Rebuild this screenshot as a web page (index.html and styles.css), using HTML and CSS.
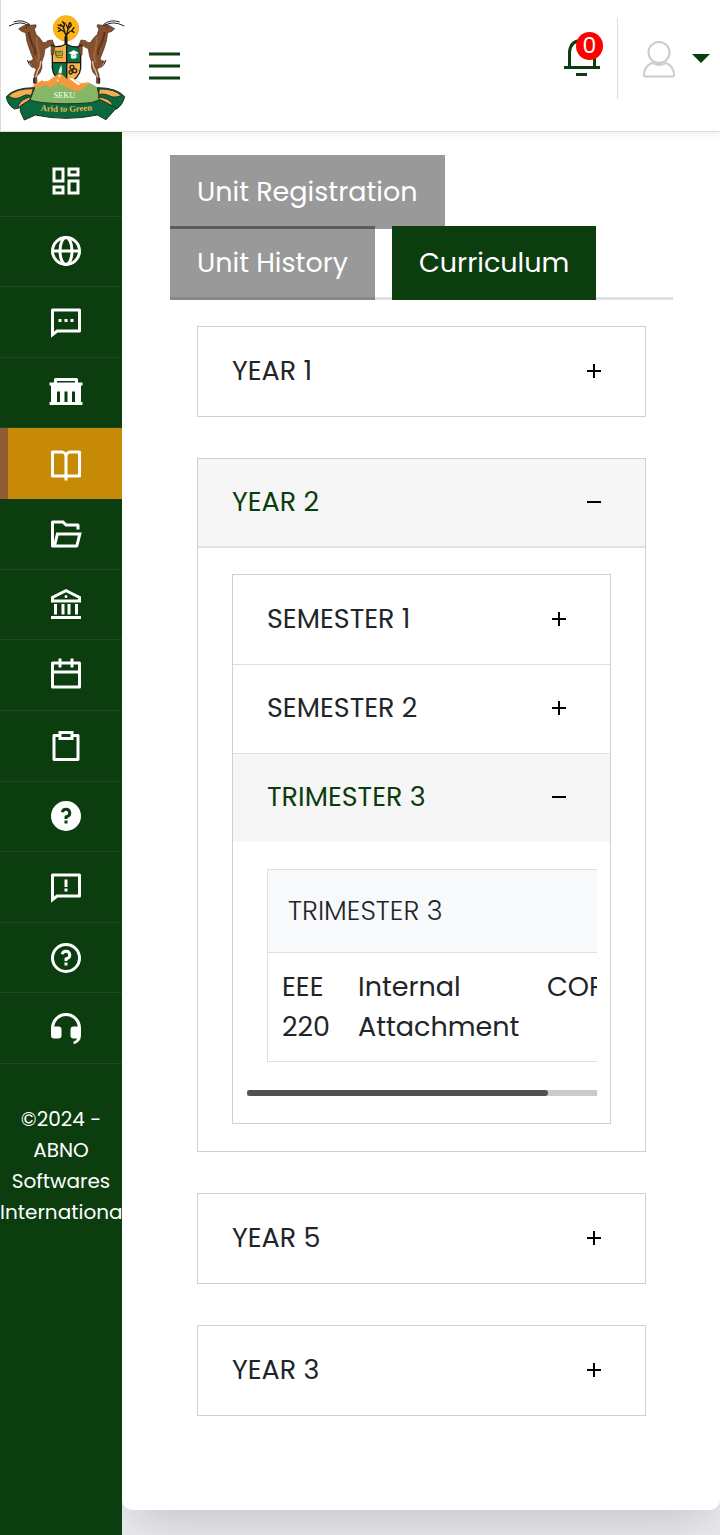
FILE: index.html
```html
<!DOCTYPE html>
<html lang="en">
<head>
<meta charset="utf-8">
<meta name="viewport" content="width=device-width, initial-scale=1">
<title>SEKU Student Portal - Curriculum</title>
<link rel="stylesheet" href="styles.css">
</head>
<body>
<header class="topbar">
  <a class="brand" href="#" aria-label="SEKU home">
    <svg class="logo" viewBox="15 40 366 330" role="img" aria-label="SEKU crest">
      <defs>
        <g id="goat">
          <path d="M56 87 L75 76 Q84 72 92 77 L107 75 Q112 80 103 88 L108 104 Q119 113 128 128 Q136 132 143 123 L157 121 L164 139 L161 164 L154 166 L153 137 Q146 143 135 147 Q133 170 125 187 Q129 204 120 219 L110 230 L111 250 L102 252 L103 225 L109 209 L98 201 L86 185 Q95 185 100 178 Q93 160 88 147 Q79 125 77 99 L64 95 Z" fill="#84502e" stroke="#4a2b1a" stroke-width="2"/>
          <path d="M86 97 Q90 123 100 139 Q108 151 105 166" fill="none" stroke="#5b3520" stroke-width="6"/>
          <path d="M110 112 Q111 147 117 160 Q120 173 112 187" fill="none" stroke="#a0683f" stroke-width="5"/>
          <path d="M122 184 Q123 199 113 214 L107 232" fill="none" stroke="#dfba94" stroke-width="4"/>
          <path d="M86 78 Q63 61 27 79 M90 75 Q67 57 41 67" fill="none" stroke="#20202a" stroke-width="3"/>
          <path d="M98 204 Q86 197 82 181" fill="none" stroke="#20202a" stroke-width="3"/>
          <path d="M153 136 L163 139 M102 235 V250" stroke="#222" stroke-width="5"/>
          <circle cx="79" cy="83" r="2" fill="#111"/>
        </g>
        <path id="ribbonText" d="M106 332 Q198 342 292 330"/>
      </defs>
      <circle cx="198" cy="86" r="38" fill="#fdb515" stroke="#f7a62c" stroke-width="3"/>
      <g fill="none" stroke="#151515" stroke-width="4" stroke-linecap="round">
        <path d="M198 140 V106 Q197 98 184 91 L174 84 M198 112 Q202 98 217 91 L222 84 M196 103 L190 82 L181 74 M190 86 L195 70 M201 102 L204 86 L199 76 M204 88 L214 77 L211 69 M184 91 L175 95 M214 93 L222 98 M182 79 L174 76 M193 74 L188 66 M206 80 L208 70"/>
        <path d="M198 142 V112" stroke-width="9"/>
      </g>
      <path d="M157 140 Q181 144 198 133 Q218 145 242 140 V205 Q240 235 198 256 Q159 235 157 205 Z" fill="#f7b04b"/>
      <path d="M200 135 Q218 145 242 140 V189 H200 Z M157 189 H200 V255 Q159 235 157 205 Z" fill="#087044"/>
      <path d="M157 140 Q181 144 198 133 Q218 145 242 140 V205 Q240 235 198 256 Q159 235 157 205 Z M200 134 V250 M157 189 H242" fill="none" stroke="#171717" stroke-width="4"/>
      <use href="#goat"/>
      <use href="#goat" transform="translate(400 0) scale(-1 1)"/>
      <path d="M168 155 h19 v12 h-19 z M170 173 h19 M165 152 l4 20 M172 160 h11" fill="none" stroke="#496b22" stroke-width="3"/>
      <path d="M206 160 L221 152 L235 159 L221 168 Z M213 166 v9 q8 5 16 -1 v-8 M234 160 v16" fill="#fff" stroke="#d8eee2" stroke-width="1"/>
      <path d="M184 195 Q178 206 175 219 L185 220 Q187 205 184 195" fill="#eaf5ee"/>
      <g fill="none" stroke="#29220d" stroke-width="4"><circle cx="216" cy="203" r="6"/><circle cx="224" cy="213" r="6"/><circle cx="212" cy="218" r="5"/></g>
      <path d="M91 277 L101 256 L129 240 L143 245 L180 219 L204 240 L217 235 L244 251 L265 248 L304 269 L306 283 Z" fill="#f6993e"/>
      <path d="M124 239 L138 233 L141 242 L132 246 Z M176 225 L183 229 L177 235 Z M208 237 L216 235 L242 252 L235 257 Z M170 241 L176 239 L174 246 Z" fill="#fff"/>
      <path d="M82 316 L104 268 L137 255 L151 264 L173 250 L205 266 L235 276 L269 251 L292 264 L315 312 Z" fill="#86b765"/>
      <path d="M104 264 Q42 264 19 291 Q22 315 43 328 L65 323 L92 296 Z M292 264 Q350 264 374 291 Q369 314 350 328 L327 323 L298 294 Z" fill="#09683e" stroke="#17301d" stroke-width="3"/>
      <path d="M100 267 Q48 266 25 289 Q44 302 63 292 Q76 282 94 287 Z M92 291 Q61 300 54 319 Q71 334 86 318 Z M298 268 Q344 267 364 288 Q342 296 330 289 Q309 279 296 286 Z M294 292 Q326 294 337 313 Q333 328 309 321 Z" fill="#f3ae55" stroke="#26391b" stroke-width="3"/>
      <path d="M62 318 L90 300 Q100 306 131 309 Q198 316 274 309 L302 300 L349 325 L318 360 L292 346 Q199 366 106 346 L73 361 L61 335 Z" fill="#09683e" stroke="#17301d" stroke-width="3"/>
      <text class="crest-name" x="193" y="294" text-anchor="middle">SEKU</text>
      <text class="crest-motto" text-anchor="middle"><textPath href="#ribbonText" startOffset="50%">Arid to Green</textPath></text>
    </svg>
  </a>
  <button class="menu-btn" aria-label="Toggle menu">
    <svg width="32" height="28" viewBox="0 0 32 28"><path d="M0 2H31M0 14H31M0 26H31" stroke="#0b3d0f" stroke-width="3"/></svg>
  </button>
  <div class="tools">
    <button class="bell" aria-label="Notifications">
      <svg width="36" height="40" viewBox="0 0 36 40"><path d="M0 30.500H36M12 37.500H23M5.500 30V15Q6.500 3.500 18 3.500T30.500 15V30" fill="none" stroke="#0b3d0f" stroke-width="3"/></svg>
      <span class="badge">0</span>
    </button>
    <button class="profile" aria-label="Account">
      <svg width="32" height="38" viewBox="0 0 32 38" fill="none" stroke="#ccc" stroke-width="2"><circle cx="16" cy="12.500" r="10.500"/><path d="M9 23Q1 26 1 35.500Q1 36.500 2 36.500H30Q31 36.500 31 35.500Q31 26 23 23Q16 27 9 23Z"/></svg>
      <svg width="18" height="10" viewBox="0 0 18 10"><path d="M0 0H18L9 9Z" fill="#0b3d0f"/></svg>
    </button>
  </div>
</header>
<div class="shell">
  <aside class="sidebar">
    <nav class="side-nav" aria-label="Main">
      <a href="#" aria-label="Dashboard"><svg viewBox="0 0 24 24"><path d="M19 5v2h-4V5h4M9 5v6H5V5h4m10 8v6h-4v-6h4M9 17v2H5v-2h4M21 3h-8v6h8V3zM11 3H3v10h8V3zm10 8h-8v10h8V11zm-10 4H3v6h8v-6z"/></svg></a>
      <a href="#" aria-label="Website"><svg viewBox="0 0 24 24" class="line"><circle cx="12" cy="12" r="9"/><ellipse cx="12" cy="12" rx="4" ry="9"/><path d="M3 12H21"/></svg></a>
      <a href="#" aria-label="Messages"><svg viewBox="0 0 24 24"><path d="M6.450 19L2 22.500V4a1 1 0 0 1 1-1h18a1 1 0 0 1 1 1v14a1 1 0 0 1-1 1H6.450zM4 18.380L5.760 17H20V5H4v13.380zM7 10h2v2H7v-2zm4 0h2v2h-2v-2zm4 0h2v2h-2v-2z"/></svg></a>
      <a href="#" aria-label="Institution"><svg viewBox="0 0 24 24"><path fill-rule="evenodd" d="M4 3Q4 2 5 2H19Q20 2 20 3V5H23V7H22V18H23V20H1V18H2V7H1V5H4ZM6 4V5H18V4ZM6 11V18H8V11ZM11 11V18H13V11ZM16 11V18H18V11Z"/></svg></a>
      <a href="#" class="active" aria-current="page" aria-label="Academics"><svg viewBox="0 0 24 24"><path d="M13 21v2h-2v-2H3a1 1 0 0 1-1-1V4a1 1 0 0 1 1-1h6a3.990 3.990 0 0 1 3 1.350A3.990 3.990 0 0 1 15 3h6a1 1 0 0 1 1 1v16a1 1 0 0 1-1 1h-8zm7-2V5h-5a2 2 0 0 0-2 2v12h7zm-9 0V7a2 2 0 0 0-2-2H4v14h7z"/></svg></a>
      <a href="#" aria-label="Files"><svg viewBox="0 0 24 24"><path d="M3 21a1 1 0 0 1-1-1V4a1 1 0 0 1 1-1h7.410l2 2H20a1 1 0 0 1 1 1v3h-2V7h-7.410l-2-2H4v11.990L5.500 11h17l-2.310 9.240a1 1 0 0 1-.970.760H3zm16.940-8H7.060l-1.500 6h12.880l1.500-6z"/></svg></a>
      <a href="#" aria-label="Finance"><svg viewBox="0 0 24 24"><path fill-rule="evenodd" d="M2 20h20v2H2v-2zm2-8h2v7H4v-7zm5 0h2v7H9v-7zm4 0h2v7h-2v-7zm5 0h2v7h-2v-7zM2 7l10-5 10 5v4H2V7zm2 1.240V9h16v-.760l-8-4-8 4zM12 8a1 1 0 1 1 0-2 1 1 0 0 1 0 2z"/></svg></a>
      <a href="#" aria-label="Timetable"><svg viewBox="0 0 24 24"><path d="M17 3h4a1 1 0 0 1 1 1v16a1 1 0 0 1-1 1H3a1 1 0 0 1-1-1V4a1 1 0 0 1 1-1h4V1h2v2h6V1h2v2zm3 8H4v8h16v-8zm-5-6H9v2H7V5H4v4h16V5h-3v2h-2V5z"/></svg></a>
      <a href="#" aria-label="Forms"><svg viewBox="0 0 24 24"><path d="M7 4V2h10v2h3.010c.540 0 .990.450.990.990v16.020a1 1 0 0 1-.990.990H3.990a1 1 0 0 1-.990-.990V4.990C3 4.450 3.450 4 3.990 4H7zm0 2H5v14h14V6h-2v2H7V6zm2-2v2h6V4H9z"/></svg></a>
      <a href="#" aria-label="FAQ"><svg viewBox="0 0 24 24"><path d="M12 22a10 10 0 1 1 0-20 10 10 0 0 1 0 20zm-1-7v2h2v-2h-2zm2-1.640A3.500 3.500 0 1 0 8.570 9.310l1.960.390A1.500 1.500 0 1 1 12 11.500a1 1 0 0 0-1 1V14h2v-.640z"/></svg></a>
      <a href="#" aria-label="Feedback"><svg viewBox="0 0 24 24"><path d="M6.450 19L2 22.500V4a1 1 0 0 1 1-1h18a1 1 0 0 1 1 1v14a1 1 0 0 1-1 1H6.450zM4 18.380L5.760 17H20V5H4v13.380zM11 13h2v2h-2v-2zm0-6h2v5h-2V7z"/></svg></a>
      <a href="#" aria-label="Help"><svg viewBox="0 0 24 24"><path d="M12 22a10 10 0 1 1 0-20 10 10 0 0 1 0 20zm0-2a8 8 0 1 0 0-16 8 8 0 0 0 0 16zm-1-5h2v2h-2v-2zm2-1.640V14h-2v-1.500a1 1 0 0 1 1-1A1.500 1.500 0 1 0 10.530 9.700l-1.960-.390A3.500 3.500 0 1 1 13 13.360z"/></svg></a>
      <a href="#" aria-label="Support"><svg viewBox="0 0 24 24"><path d="M22 17a6 6 0 0 1-5 5.900v-1.900a4 4 0 0 0 2.500-2H17a2 2 0 0 1-2-2v-4a2 2 0 0 1 2-2h2.940a8 8 0 0 0-15.880 0H7a2 2 0 0 1 2 2v4a2 2 0 0 1-2 2H4a2 2 0 0 1-2-2v-5a10 10 0 1 1 20 0z"/></svg></a>
    </nav>
    <p class="copyright">©2024 - ABNO Softwares International</p>
  </aside>
  <main class="content">
    <section class="card">
      <div class="tabs" role="tablist">
        <button class="tab" role="tab">Unit Registration</button>
        <button class="tab" role="tab">Unit History</button>
        <button class="tab selected" role="tab" aria-selected="true">Curriculum</button>
      </div>
      <div class="years">
        <div class="panel"><button class="toggle" aria-expanded="false">YEAR 1<span class="sign"></span></button></div>
        <div class="panel">
          <button class="toggle ruled" aria-expanded="true">YEAR 2<span class="sign"></span></button>
          <div class="year-body">
            <div class="semesters">
              <button class="toggle" aria-expanded="false">SEMESTER 1<span class="sign"></span></button>
              <button class="toggle" aria-expanded="false">SEMESTER 2<span class="sign"></span></button>
              <button class="toggle" aria-expanded="true">TRIMESTER 3<span class="sign"></span></button>
              <div class="units">
                <div class="scroller">
                  <table>
                    <colgroup><col class="code"><col class="title"><col class="kind"></colgroup>
                    <thead><tr><th colspan="3">TRIMESTER 3</th></tr></thead>
                    <tbody><tr><td>EEE 220</td><td>Internal Attachment</td><td>CORE</td></tr></tbody>
                  </table>
                </div>
                <div class="track"><div class="thumb"></div></div>
              </div>
            </div>
          </div>
        </div>
        <div class="panel"><button class="toggle" aria-expanded="false">YEAR 5<span class="sign"></span></button></div>
        <div class="panel"><button class="toggle" aria-expanded="false">YEAR 3<span class="sign"></span></button></div>
      </div>
    </section>
  </main>
</div>
</body>
</html>
```
FILE: styles.css
```css
* { box-sizing: border-box; }
body {
  margin: 0;
  min-height: 100vh;
  display: flex;
  flex-direction: column;
  font-family: Poppins, "Open Sans", "Noto Sans", sans-serif;
  color: #212529;
  background: #ebebf0;
}
button { font: inherit; color: inherit; background: none; border: 0; padding: 0; cursor: pointer; }
svg { display: block; }

/* Top bar */
.topbar {
  position: relative;
  z-index: 1;
  display: flex;
  align-items: center;
  height: 132px;
  padding-right: 10px;
  background: #fff;
  border-left: 1px solid #ddd;
  border-bottom: 1px solid #dcdcdc;
  box-shadow: 0 2px 8px rgba(0, 0, 0, .08);
}
.brand { flex: none; margin: 5px 22px 0 4px; }
.logo { width: 122px; height: 110px; }
.crest-name { font: 25px "Liberation Serif", serif; fill: #fff; }
.crest-motto { font: bold 26px "Liberation Serif", serif; fill: #efb64e; }
.menu-btn { flex: none; }
.tools { display: flex; align-items: center; margin-left: auto; }
.bell { position: relative; margin: 0 17px 18px 0; }
.badge {
  position: absolute;
  left: 12px;
  top: -5px;
  width: 27px;
  height: 28px;
  border-radius: 50%;
  background: #f00;
  color: #fff;
  font-size: 22px;
  line-height: 27px;
}
.profile {
  display: flex;
  align-items: center;
  gap: 17px;
  height: 81px;
  padding-left: 25px;
  margin-bottom: 14px;
  border-left: 1px solid #dcdcdc;
}

/* Shell */
.shell { flex: 1; display: grid; grid-template-columns: 122px 1fr; }
.sidebar {
  position: relative;
  z-index: 1;
  overflow: hidden;
  background: #0b3d0f;
  color: #fff;
}
.side-nav { display: grid; grid-template-rows: repeat(13, 1fr); height: 918px; margin-top: 14px; }
.side-nav a {
  display: flex;
  align-items: center;
  padding-left: 48px;
  border-bottom: 1px solid #1b4a20;
}
.side-nav svg { width: 36px; height: 36px; fill: #fff; }
.side-nav .line { fill: none; stroke: #fff; stroke-width: 2; }
.side-nav .active { padding-left: 40px; border-left: 8px solid #8e5b33; border-bottom: 0; background: #c68a07; }
.copyright { margin: 40px 0 0; font-size: 20px; line-height: 31px; text-align: center; }

/* Content card */
.content { min-width: 0; padding-bottom: 25px; }
.card {
  padding: 23px 47px 94px 48px;
  background: #fff;
  border-radius: 0 0 10px 10px;
  box-shadow: 0 20px 50px -10px rgba(0, 0, 0, .18);
}
.tabs { display: flex; flex-wrap: wrap; border-bottom: 3px solid #dee2e6; }
.tab {
  height: 74px;
  margin: 0 17px -3px 0;
  padding: 0 27px;
  font-size: 27px;
  color: #fff;
  background: rgba(0, 0, 0, .4);
}
.tab.selected { background: #0b3d0f; }

/* Accordion */
.years { display: grid; gap: 41px; padding: 26px 27px 0; }
.panel, .semesters { min-width: 0; border: 1px solid #d0d0d0; }
.toggle {
  display: flex;
  align-items: center;
  justify-content: space-between;
  width: 100%;
  min-height: 89px;
  padding: 0 44px 2px 34px;
  font-size: 27px;
  line-height: 40px;
  text-align: left;
}
.toggle[aria-expanded="true"] { background: #f6f6f6; color: #0b3d0f; }
.ruled { border-bottom: 2px solid #e1e1e1; }
.sign {
  width: 14px;
  height: 14px;
  background:
    linear-gradient(#000, #000) center / 14px 2px no-repeat,
    linear-gradient(#000, #000) center / 2px 14px no-repeat;
}
[aria-expanded="true"] .sign { background: linear-gradient(#000, #000) center / 14px 2px no-repeat; }
.year-body { padding: 26px 34px 27px; }
.semesters .toggle + .toggle { border-top: 1px solid #dedede; }
.units { padding: 27px 13px 27px 14px; }
.scroller { overflow-x: auto; scrollbar-width: none; padding-left: 20px; }
table {
  width: 368px;
  table-layout: fixed;
  border-collapse: separate;
  border-spacing: 0;
  border: 1px solid #dee0e2;
}
.code { width: 76px; }
.title { width: 189px; }
th {
  padding: 21px 20px;
  border-bottom: 1px solid #dee0e2;
  background: #f8f9fb;
  font-size: 27px;
  font-weight: 300;
  line-height: 40px;
  text-align: left;
}
td { padding: 14px; font-size: 27px; line-height: 40px; vertical-align: top; }
.track { height: 6px; margin-top: 28px; background: #cacaca; }
.thumb { width: 86%; height: 6px; border-radius: 3px; background: #505050; }
```
